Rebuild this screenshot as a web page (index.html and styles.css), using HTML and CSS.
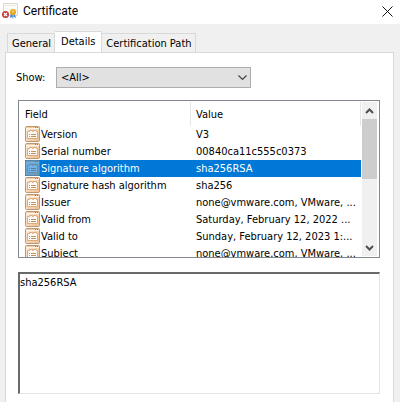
FILE: index.html
```html
<!DOCTYPE html>
<html lang="en">
<head>
<meta charset="utf-8">
<title>Certificate</title>
<link rel="stylesheet" href="styles.css">
</head>
<body>
<svg class="defs" aria-hidden="true">
  <defs>
    <linearGradient id="sheet" x1="0" y1="0" x2="1" y2="1">
      <stop offset="0" stop-color="#fff0e2"/>
      <stop offset="1" stop-color="#efbd8c"/>
    </linearGradient>
    <symbol id="field" viewBox="0 0 15 16">
      <rect x=".5" y=".5" width="14" height="15" rx="1" fill="url(#sheet)" stroke="#bd9877"/>
      <path d="M1 1.500h13" stroke="#f4c79c"/>
      <path d="M1 2.500h13" stroke="#fff6ec"/>
      <path d="M10 1.500h1M12 1.500h1" stroke="#c86f30"/>
      <path d="M2.500 5.500h2v-1h3v1h1v-1h3v1h1v7h-10z" fill="#fffaf4" stroke="#d9ab7f"/>
      <path d="M4 8.500h1M6 8.500h5M4 10.500h1M6 10.500h5" stroke="#bd9068"/>
    </symbol>
  </defs>
</svg>
<header class="titlebar">
  <svg class="app-icon" viewBox="0 0 16 16" aria-hidden="true">
    <path d="M1.500 .5h14v12h-14z" fill="#fbfaf7" stroke="#ddd7cd"/>
    <path d="M3 2.500h11" stroke="#eee9df"/>
    <path d="M9 9l-1 6 2-1 1 2 1-6zM12 9l2 6-2-1-1 1-1-5z" fill="#3c82d4"/>
    <circle cx="11" cy="9" r="3" fill="#e5a51f"/>
    <circle cx="11" cy="8.500" r="1.300" fill="#f7cf60"/>
    <circle cx="3.500" cy="11.500" r="3.500" fill="#c53b3d"/>
    <path d="M2 10l3 3M5 10l-3 3" stroke="#fff" stroke-width="1.200"/>
  </svg>
  <h1 class="title">Certificate</h1>
  <button class="close" type="button" aria-label="Close">
    <svg viewBox="0 0 11 11" width="11" height="11"><path d="M.5 .5l10 10M10.500 .5l-10 10" stroke="#111" fill="none"/></svg>
  </button>
</header>
<main class="dialog">
  <div class="tabs" role="tablist">
    <button class="tab" type="button" role="tab">General</button>
    <button class="tab active" type="button" role="tab" aria-selected="true">Details</button>
    <button class="tab" type="button" role="tab">Certification Path</button>
  </div>
  <section class="panel" role="tabpanel">
    <div class="show">
      <label for="show">Show:</label>
      <div class="picker">
        <select id="show"><option>&lt;All&gt;</option></select>
        <svg class="chevron" viewBox="0 0 9 6" aria-hidden="true"><path d="M.5 .5l4 4 4-4" fill="none" stroke="#444" stroke-width="1.200"/></svg>
      </div>
    </div>
    <div class="list">
      <table class="fields">
        <thead><tr><th class="name">Field</th><th class="value">Value</th></tr></thead>
        <tbody>
          <tr><td><span class="cell"><svg class="icon"><use href="#field"/></svg><span class="text">Version</span></span></td><td>V3</td></tr>
          <tr><td><span class="cell"><svg class="icon"><use href="#field"/></svg><span class="text">Serial number</span></span></td><td>00840ca11c555c0373</td></tr>
          <tr class="selected"><td><span class="cell"><svg class="icon"><use href="#field"/></svg><span class="text">Signature algorithm</span></span></td><td>sha256RSA</td></tr>
          <tr><td><span class="cell"><svg class="icon"><use href="#field"/></svg><span class="text">Signature hash algorithm</span></span></td><td>sha256</td></tr>
          <tr><td><span class="cell"><svg class="icon"><use href="#field"/></svg><span class="text">Issuer</span></span></td><td>none@vmware.com, VMware, ...</td></tr>
          <tr><td><span class="cell"><svg class="icon"><use href="#field"/></svg><span class="text">Valid from</span></span></td><td>Saturday, February 12, 2022 ...</td></tr>
          <tr><td><span class="cell"><svg class="icon"><use href="#field"/></svg><span class="text">Valid to</span></span></td><td>Sunday, February 12, 2023 1:...</td></tr>
          <tr><td><span class="cell"><svg class="icon"><use href="#field"/></svg><span class="text">Subject</span></span></td><td>none@vmware.com, VMware, ...</td></tr>
        </tbody>
      </table>
      <div class="scrollbar" aria-hidden="true">
        <div class="arrow"><svg viewBox="0 0 9 6"><path d="M1 5l3.500-3.500L8 5" fill="none" stroke="#505050" stroke-width="2"/></svg></div>
        <div class="track"><div class="thumb"></div></div>
        <div class="arrow"><svg viewBox="0 0 9 6"><path d="M1 1l3.500 3.500L8 1" fill="none" stroke="#505050" stroke-width="2"/></svg></div>
      </div>
    </div>
    <textarea class="detail" aria-label="Field value" readonly>sha256RSA</textarea>
  </section>
</main>
</body>
</html>
```

FILE: styles.css
```css
* { box-sizing: border-box; }

body {
  display: flex;
  flex-direction: column;
  height: 100vh;
  margin: 0;
  overflow: hidden;
  background: #f0f0f0;
  color: #000;
  font: 11px/17px "DejaVu Sans Condensed", Tahoma, sans-serif;
}

button, select, textarea {
  margin: 0;
  border-radius: 0;
  color: inherit;
  font: inherit;
}

.defs { position: absolute; width: 0; height: 0; }

.titlebar {
  display: flex;
  align-items: center;
  height: 24px;
  padding: 0 7px 2px 2px;
  background: #fff;
}
.app-icon { width: 16px; height: 16px; }
.title {
  flex: 1;
  margin: 0 0 0 5px;
  font: 12px/16px Roboto, "Segoe UI", sans-serif;
}
.close {
  display: flex;
  padding: 0;
  border: 0;
  background: none;
}

.dialog {
  display: flex;
  flex: 1;
  flex-direction: column;
  min-height: 0;
  padding: 7px 6px 0 5px;
}
.tabs {
  display: flex;
  align-items: flex-end;
  margin-bottom: -1px;
  padding-left: 2px;
}
.tab {
  height: 20px;
  padding: 0 3px 0 4px;
  border: 1px solid #d9d9d9;
  background: #f0f0f0;
  white-space: nowrap;
}
.tab + .tab { border-left: 0; }
.tab.active {
  height: 22px;
  padding: 0 6px 2px;
  border-bottom-color: #fff;
  background: #fff;
}
.panel {
  display: flex;
  flex: 1;
  flex-direction: column;
  min-height: 0;
  padding: 14px 13px 8px 12px;
  border: solid #d9d9d9;
  border-width: 1px 1px 0;
  background: #fff;
}

.show {
  display: flex;
  align-items: center;
  margin: 0 0 12px -2px;
}
.show label { width: 40px; }
.picker { position: relative; width: 195px; }
.picker select {
  display: block;
  width: 100%;
  height: 21px;
  padding: 0 4px;
  border: 1px solid #adadad;
  background: #e1e1e1;
  appearance: none;
}
.chevron {
  position: absolute;
  top: 8px;
  right: 4px;
  width: 9px;
  height: 6px;
  pointer-events: none;
}

.list {
  display: flex;
  flex: none;
  height: 158px;
  margin-bottom: 14px;
  padding: 1px;
  overflow: hidden;
  border: 1px solid #828790;
}
.fields {
  flex: 1;
  align-self: flex-start;
  width: 0;
  table-layout: fixed;
  border-collapse: separate;
  border-spacing: 0;
}
.fields th {
  height: 24px;
  padding: 0 6px 0 5px;
  border-right: 1px solid #e5e5e5;
  font-weight: normal;
  text-align: left;
}
.name { width: 171px; }
.fields td {
  height: 17px;
  padding: 0 0 0 5px;
  white-space: nowrap;
}
.cell { display: flex; height: 17px; }
.icon { width: 15px; height: 16px; }
.text { flex: 1; padding-left: 1px; }
.selected .text, .selected td + td { background: #0078d7; color: #fff; }
.selected .icon { background: #0078d7; }
.selected .icon use { opacity: .45; }

.scrollbar {
  display: flex;
  flex-direction: column;
  width: 17px;
  border: solid #fff;
  border-width: 0 1px;
  background: #f0f0f0;
}
.arrow { display: grid; place-items: center; height: 17px; }
.arrow svg { width: 9px; height: 6px; }
.track { flex: 1; }
.thumb { height: 60px; background: #cdcdcd; }

.detail {
  flex: 1;
  min-height: 0;
  padding: 0;
  border: 2px solid;
  border-color: #696969 #e3e3e3 #e3e3e3 #696969;
  border-width: 2px 1px 1px 2px;
  background: #fff;
  outline: 0;
  resize: none;
}
```
